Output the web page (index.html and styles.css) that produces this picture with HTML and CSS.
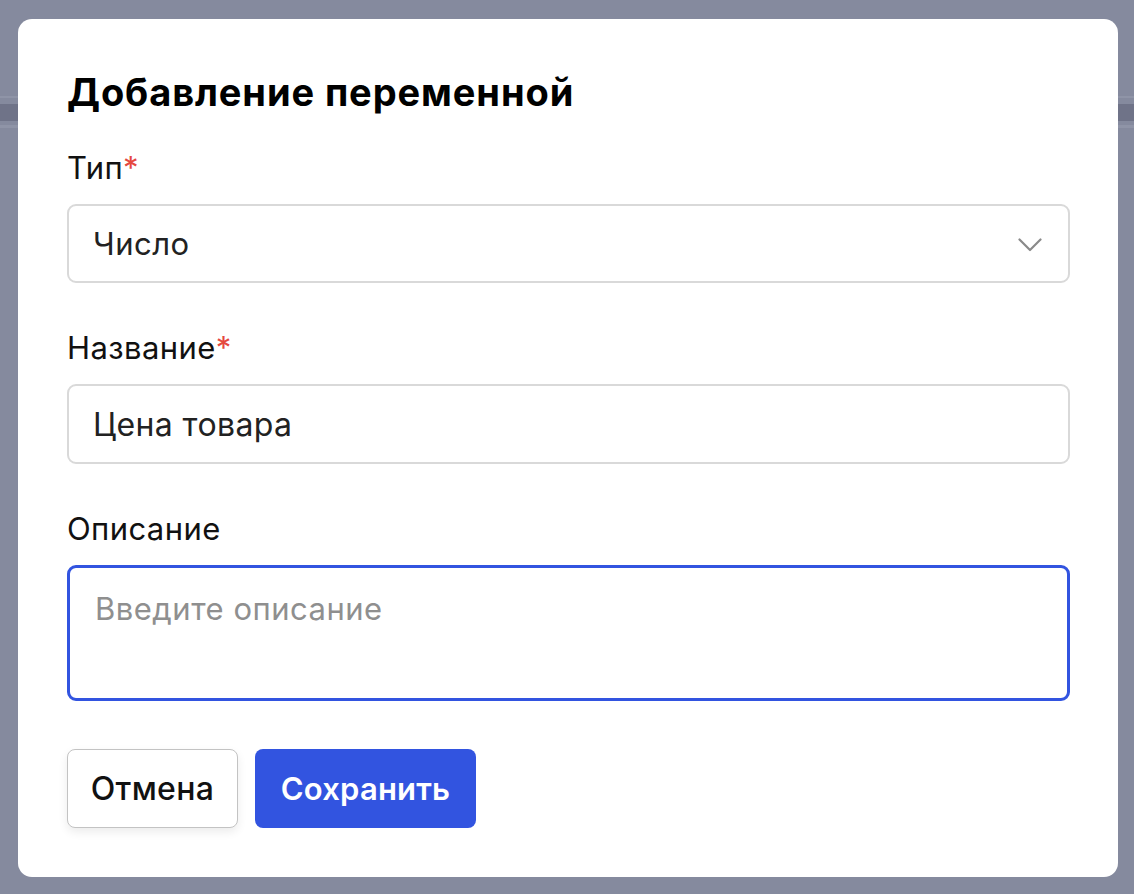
FILE: index.html
```html
<!DOCTYPE html>
<html lang="ru">
<head>
<meta charset="utf-8">
<title>Добавление переменной</title>
<link rel="stylesheet" href="styles.css">
</head>
<body>
  <div class="page">
    <div class="toolbar"></div>
  </div>

  <div class="overlay">
    <form class="modal">
      <h1 class="modal-title">Добавление переменной</h1>

      <div class="field">
        <label class="field-label">Тип<span class="req">*</span></label>
        <div class="select">
          <span class="select-value">Число</span>
          <svg class="chevron" width="24" height="14" viewBox="0 0 24 14" fill="none">
            <path d="M1.5 1.5 L12 12 L22.5 1.5" stroke="#8a8a8a" stroke-width="2.2" stroke-linecap="round" stroke-linejoin="round"/>
          </svg>
        </div>
      </div>

      <div class="field">
        <label class="field-label">Название<span class="req">*</span></label>
        <div class="input">Цена товара</div>
      </div>

      <div class="field">
        <label class="field-label">Описание</label>
        <div class="textarea"><span class="placeholder">Введите описание</span></div>
      </div>

      <div class="actions">
        <button type="button" class="btn btn-secondary">Отмена</button>
        <button type="button" class="btn btn-primary">Сохранить</button>
      </div>
    </form>
  </div>
</body>
</html>
```

FILE: styles.css
```css
* {
  box-sizing: border-box;
}

html, body {
  margin: 0;
  height: 100%;
}

body {
  background: #858a9e;
  font-family: Inter, "Noto Sans", sans-serif;
  color: #111;
  overflow: hidden;
}

/* page content dimmed behind the dialog */
.page {
  padding-top: 96px;
}

.toolbar {
  height: 32px;
  border-top: 2px solid #8f94a7;
  border-bottom: 3px solid #8f94a7;
  background: linear-gradient(#858a9e 0 6px, #6f7388 6px 23px, #858a9e 23px);
}

/* dialog layer */
.overlay {
  position: fixed;
  left: 18px;
  top: 19px;
  width: 1100px;
}

.modal {
  background: #fff;
  border-radius: 14px;
  padding: 48px 49px 49px;
  display: flex;
  flex-direction: column;
  gap: 43px;
}

.modal-title {
  margin: 0 0 -15px;
  font-size: 38px;
  line-height: 51px;
  font-weight: 700;
  color: #000;
  letter-spacing: 0.9px;
}

.field {
  display: flex;
  flex-direction: column;
  gap: 14px;
}

.field-label {
  font-size: 31px;
  line-height: 44px;
  font-weight: 400;
  color: #111;
  letter-spacing: 0.4px;
}

.req {
  color: #e5483f;
}

.select,
.input,
.textarea {
  width: 1003px;
  border: 2px solid #d9d9d9;
  border-radius: 9px;
  font-size: 31px;
  color: #222;
}

.select {
  height: 79px;
  padding: 0 26px 0 24px;
  display: flex;
  align-items: center;
  justify-content: space-between;
  letter-spacing: 0.5px;
}

.chevron {
  margin-top: 2px;
}

.input {
  height: 80px;
  padding: 0 24px;
  display: flex;
  align-items: center;
  font-size: 32px;
  letter-spacing: 0.4px;
}

.textarea {
  height: 136px;
  border: 3px solid #3254e0;
  padding: 23px 25px;
  line-height: 36px;
  letter-spacing: 0.5px;
}

.placeholder {
  color: #8f8f8f;
}

.actions {
  display: flex;
  gap: 17px;
  margin-top: 5px;
}

.btn {
  height: 79px;
  border-radius: 8px;
  font-family: Inter, "Noto Sans", sans-serif;
  padding: 0;
}

.btn-secondary {
  width: 171px;
  background: #fff;
  border: 1px solid #c3c3c3;
  color: #111;
  font-size: 32px;
  font-weight: 500;
  letter-spacing: 0.3px;
  box-shadow: 0 4px 10px rgba(0, 0, 0, 0.08);
}

.btn-primary {
  width: 221px;
  background: #3254e0;
  border: none;
  color: #fff;
  font-size: 31px;
  font-weight: 600;
  letter-spacing: 0.2px;
}
```
